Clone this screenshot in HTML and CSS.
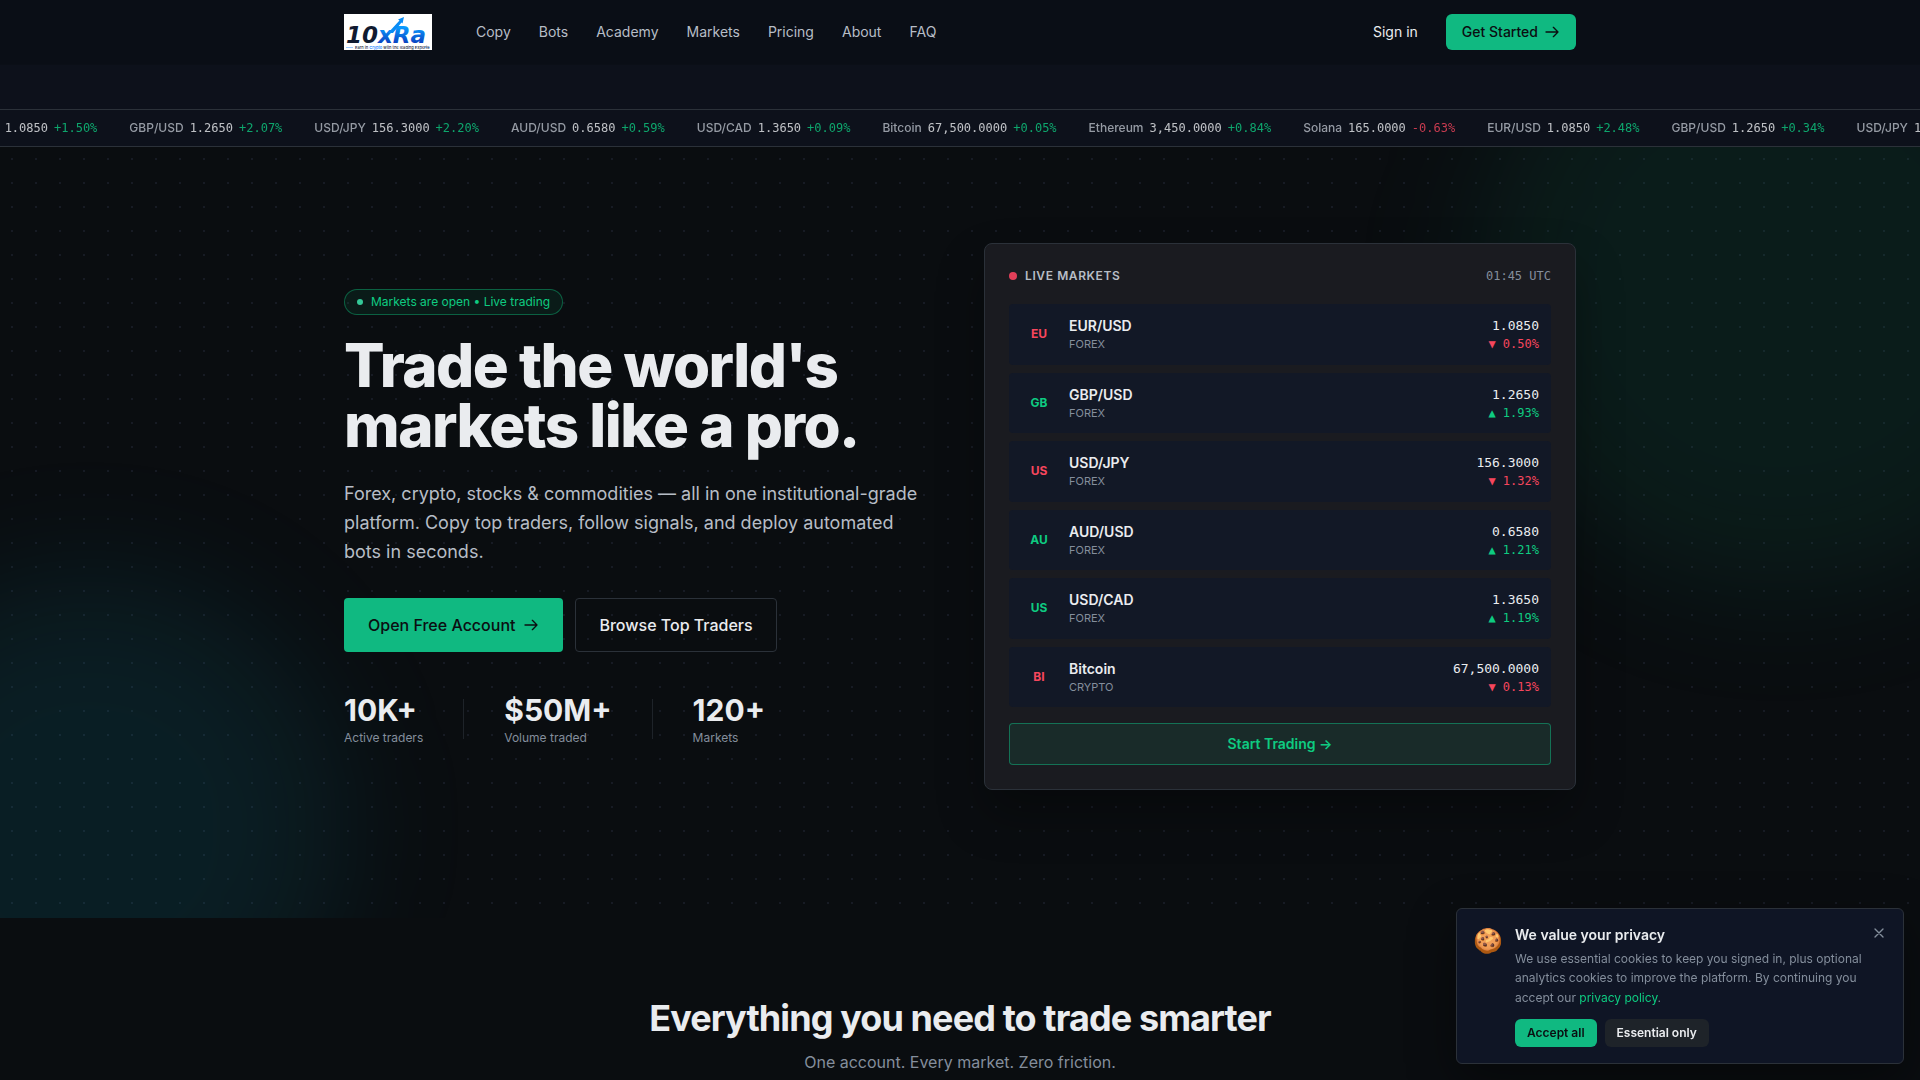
FILE: index.html
```html
<!DOCTYPE html>
<html lang="en">
<head>
    <meta charset="UTF-8">
    <meta name="viewport" content="width=device-width, initial-scale=1.0">
    <title>10xRa</title>
    <link rel="stylesheet" href="styles.css">
</head>
<body>
    <header class="site-header">
        <div class="container header-inner">
            <a href="#" class="logo" aria-label="10xRa">
                <svg viewBox="0 0 88 36" width="88" height="36">
                    <defs>
                        <linearGradient id="logoBlue" x1="0" y1="0" x2="0" y2="1">
                            <stop offset="0.2" stop-color="#0a9bff"/>
                            <stop offset="0.9" stop-color="#0a35b8"/>
                        </linearGradient>
                    </defs>
                    <rect width="88" height="36" fill="#fff"/>
                    <text class="logo-text" x="2" y="29"><tspan fill="#101a30">10</tspan><tspan fill="url(#logoBlue)">xRa</tspan></text>
                    <path d="M44 19 55.500 6.500 54 5.500 60 3 58.500 9.500 57.500 8.500 49 19z" fill="#0a8cf5"/>
                    <path d="M2 33.500h7M80 33.500h6" stroke="#5aa7ff" stroke-width=".6"/>
                    <text class="logo-tagline" x="11" y="35">Earn in <tspan fill="#0a7bff">Crypto</tspan> with the leading Experts</text>
                </svg>
            </a>
            <nav class="main-nav">
                <a href="#">Copy</a>
                <a href="#">Bots</a>
                <a href="#">Academy</a>
                <a href="#">Markets</a>
                <a href="#">Pricing</a>
                <a href="#">About</a>
                <a href="#">FAQ</a>
            </nav>
            <div class="header-actions">
                <a href="#" class="sign-in">Sign in</a>
                <a href="#" class="btn btn-primary btn-small">Get Started
                    <svg class="arrow" viewBox="0 0 24 24"><path d="M3 12h18M14 5l7 7-7 7"/></svg>
                </a>
            </div>
        </div>
    </header>

    <div class="ticker">
        <div class="ticker-track">
            <div class="ticker-item"><span>EUR/USD</span><b>1.0850</b><i class="up">+1.50%</i></div>
            <div class="ticker-item"><span>GBP/USD</span><b>1.2650</b><i class="up">+2.07%</i></div>
            <div class="ticker-item"><span>USD/JPY</span><b>156.3000</b><i class="up">+2.20%</i></div>
            <div class="ticker-item"><span>AUD/USD</span><b>0.6580</b><i class="up">+0.59%</i></div>
            <div class="ticker-item"><span>USD/CAD</span><b>1.3650</b><i class="up">+0.09%</i></div>
            <div class="ticker-item"><span>Bitcoin</span><b>67,500.0000</b><i class="up">+0.05%</i></div>
            <div class="ticker-item"><span>Ethereum</span><b>3,450.0000</b><i class="up">+0.84%</i></div>
            <div class="ticker-item"><span>Solana</span><b>165.0000</b><i class="down">-0.63%</i></div>
            <div class="ticker-item"><span>EUR/USD</span><b>1.0850</b><i class="up">+2.48%</i></div>
            <div class="ticker-item"><span>GBP/USD</span><b>1.2650</b><i class="up">+0.34%</i></div>
            <div class="ticker-item"><span>USD/JPY</span><b>156.3000</b><i class="up">+1.12%</i></div>
        </div>
    </div>

    <main>
        <section class="hero">
            <div class="glow glow-green"></div>
            <div class="glow glow-cyan"></div>
            <div class="container hero-grid">
                <div class="hero-copy">
                    <div class="badge"><span class="badge-dot"></span>Markets are open • Live trading</div>
                    <h1>Trade the world's markets like a pro.</h1>
                    <p class="lead">Forex, crypto, stocks &amp; commodities — all in one institutional-grade platform. Copy top traders, follow signals, and deploy automated bots in seconds.</p>
                    <div class="hero-buttons">
                        <a href="#" class="btn btn-primary btn-large">Open Free Account
                            <svg class="arrow" viewBox="0 0 24 24"><path d="M3 12h18M14 5l7 7-7 7"/></svg>
                        </a>
                        <a href="#" class="btn btn-outline btn-large">Browse Top Traders</a>
                    </div>
                    <div class="stats">
                        <div class="stat"><strong>10K+</strong><span>Active traders</span></div>
                        <div class="stat-divider"></div>
                        <div class="stat"><strong>$50M+</strong><span>Volume traded</span></div>
                        <div class="stat-divider"></div>
                        <div class="stat"><strong>120+</strong><span>Markets</span></div>
                    </div>
                </div>

                <div class="market-card">
                    <div class="market-head">
                        <h2><span class="live-dot"></span>Live Markets</h2>
                        <time>01:45 UTC</time>
                    </div>
                    <div class="market-list">
                        <a href="#" class="market-row">
                            <span class="symbol down">EU</span>
                            <span class="pair"><b>EUR/USD</b><small>Forex</small></span>
                            <span class="quote"><b>1.0850</b><small class="down">▼ 0.50%</small></span>
                        </a>
                        <a href="#" class="market-row">
                            <span class="symbol up">GB</span>
                            <span class="pair"><b>GBP/USD</b><small>Forex</small></span>
                            <span class="quote"><b>1.2650</b><small class="up">▲ 1.93%</small></span>
                        </a>
                        <a href="#" class="market-row">
                            <span class="symbol down">US</span>
                            <span class="pair"><b>USD/JPY</b><small>Forex</small></span>
                            <span class="quote"><b>156.3000</b><small class="down">▼ 1.32%</small></span>
                        </a>
                        <a href="#" class="market-row">
                            <span class="symbol up">AU</span>
                            <span class="pair"><b>AUD/USD</b><small>Forex</small></span>
                            <span class="quote"><b>0.6580</b><small class="up">▲ 1.21%</small></span>
                        </a>
                        <a href="#" class="market-row">
                            <span class="symbol up">US</span>
                            <span class="pair"><b>USD/CAD</b><small>Forex</small></span>
                            <span class="quote"><b>1.3650</b><small class="up">▲ 1.19%</small></span>
                        </a>
                        <a href="#" class="market-row">
                            <span class="symbol down">BI</span>
                            <span class="pair"><b>Bitcoin</b><small>Crypto</small></span>
                            <span class="quote"><b>67,500.0000</b><small class="down">▼ 0.13%</small></span>
                        </a>
                    </div>
                    <a href="#" class="start-trading">Start Trading →</a>
                </div>
            </div>
        </section>

        <section class="features">
            <h2>Everything you need to trade smarter</h2>
            <p>One account. Every market. Zero friction.</p>
        </section>
    </main>

    <div class="cookie-banner" role="dialog" aria-labelledby="cookieTitle">
        <div class="cookie-icon">🍪</div>
        <div class="cookie-body">
            <h3 id="cookieTitle">We value your privacy</h3>
            <p>We use essential cookies to keep you signed in, plus optional analytics cookies to improve the platform. By continuing you accept our <a href="#">privacy policy</a>.</p>
            <div class="cookie-buttons">
                <button type="button" class="btn-accept">Accept all</button>
                <button type="button" class="btn-essential">Essential only</button>
            </div>
        </div>
        <button type="button" class="cookie-close" aria-label="Close">
            <svg viewBox="0 0 24 24" width="16" height="16"><path d="M18 6 6 18M6 6l12 12"/></svg>
        </button>
    </div>
</body>
</html>
```

FILE: styles.css
```css
:root {
    --bg: #0a0d10;
    --surface: #0d111b;
    --row: #121826;
    --card: #1a1b20;
    --border: #2b3139;
    --primary: #10b981;
    --up: #0ecb81;
    --down: #f6465d;
    --text: #eaecef;
    --text-soft: #b7bdc6;
    --text-muted: #848e9c;
    --mono: "DejaVu Sans Mono", monospace;
}

* {
    box-sizing: border-box;
    margin: 0;
    padding: 0;
}

body {
    font-family: Inter, sans-serif;
    font-size: 16px;
    line-height: 24px;
    color: var(--text);
    background-color: var(--bg);
    overflow-x: hidden;
}

a {
    color: inherit;
    text-decoration: none;
}

.up {
    color: var(--up);
}

.down {
    color: var(--down);
}

.container {
    width: 100%;
    max-width: 1280px;
    margin: 0 auto;
    padding: 0 24px;
}

/* Header */
.site-header {
    position: fixed;
    top: 0;
    left: 0;
    right: 0;
    z-index: 10;
    background-color: #0a0e16;
    border-bottom: 1px solid #0b0f17;
}

.header-inner {
    display: flex;
    align-items: center;
    height: 64px;
    font-size: 14px;
    line-height: 20px;
}

.logo {
    display: flex;
    margin-right: 44px;
}

.logo-text {
    font: italic 700 23px "DejaVu Sans", sans-serif;
}

.logo-tagline {
    font: 500 4px Inter, sans-serif;
    fill: #1c2740;
}

.main-nav {
    display: flex;
    gap: 28px;
    color: var(--text-soft);
}

.header-actions {
    display: flex;
    align-items: center;
    gap: 28px;
    margin-left: auto;
}

/* Buttons */
.btn {
    display: inline-flex;
    align-items: center;
    gap: 8px;
    border: 1px solid transparent;
    border-radius: 4px;
    font-weight: 500;
}

.btn-primary {
    color: #0b0e11;
    background-color: var(--primary);
}

.btn-outline {
    border-color: var(--border);
}

.btn-small {
    gap: 6px;
    padding: 7px 15px;
    border-radius: 6px;
}

.btn-large {
    padding: 14px 23px;
    font-size: 16px;
    line-height: 24px;
}

.arrow {
    width: 16px;
    height: 16px;
    fill: none;
    stroke: currentColor;
    stroke-width: 2;
    stroke-linecap: round;
    stroke-linejoin: round;
}

/* Ticker */
.ticker {
    padding-top: 109px;
    background-color: var(--surface);
    overflow: hidden;
}

.ticker-track {
    display: flex;
    gap: 32px;
    margin-left: -55px;
    padding: 10px 0;
    border-top: 1px solid var(--border);
    border-bottom: 1px solid var(--border);
    font-size: 12px;
    line-height: 16px;
    white-space: nowrap;
}

.ticker-item {
    display: flex;
    gap: 6px;
    opacity: 0.8;
}

.ticker-item span {
    color: var(--text-soft);
    font-weight: 500;
}

.ticker-item b,
.ticker-item i {
    font-family: var(--mono);
    font-style: normal;
    font-weight: 400;
}

/* Hero */
.hero {
    position: relative;
    padding: 96px 0 128px;
    overflow: hidden;
    isolation: isolate;
}

.hero::before {
    content: "";
    position: absolute;
    inset: 0;
    z-index: -1;
    background-image: radial-gradient(circle, #171b24 1px, transparent 1px);
    background-size: 24px 24px;
}

.glow {
    position: absolute;
    z-index: -1;
    border-radius: 50%;
    filter: blur(64px);
}

.glow-green {
    top: -160px;
    right: -160px;
    width: 600px;
    height: 600px;
    background-color: rgba(16, 185, 129, 0.09);
}

.glow-cyan {
    bottom: -160px;
    left: -160px;
    width: 500px;
    height: 500px;
    background-color: rgba(6, 182, 212, 0.1);
}

.hero-grid {
    display: grid;
    grid-template-columns: 1fr 1fr;
    align-items: center;
    gap: 48px;
}

.badge {
    display: inline-flex;
    align-items: center;
    gap: 8px;
    padding: 4px 12px;
    border: 1px solid rgba(14, 203, 129, 0.4);
    border-radius: 999px;
    background-color: rgba(14, 203, 129, 0.08);
    color: var(--up);
    font-size: 12px;
    line-height: 16px;
}

.badge-dot {
    width: 6px;
    height: 6px;
    border-radius: 50%;
    background-color: #34c897;
}

h1 {
    margin-top: 20px;
    font-size: 60px;
    line-height: 60px;
    font-weight: 800;
    letter-spacing: -0.025em;
}

.lead {
    margin-top: 24px;
    max-width: 576px;
    color: var(--text-soft);
    font-size: 18px;
    line-height: 29px;
}

.hero-buttons {
    display: flex;
    gap: 12px;
    margin-top: 32px;
}

.stats {
    display: flex;
    align-items: center;
    gap: 40px;
    margin-top: 40px;
}

.stat strong {
    display: block;
    font-size: 30px;
    line-height: 36px;
    font-weight: 700;
}

.stat span {
    display: block;
    margin-top: 2px;
    color: var(--text-muted);
    font-size: 12px;
    line-height: 16px;
}

.stat-divider {
    width: 1px;
    height: 40px;
    background-color: #1e2329;
}

/* Market card */
.market-card {
    padding: 24px;
    border: 1px solid var(--border);
    border-radius: 8px;
    background-color: var(--card);
    box-shadow: 0 24px 48px rgba(0, 0, 0, 0.3);
}

.market-head {
    display: flex;
    justify-content: space-between;
    margin-bottom: 20px;
    font-size: 12px;
    line-height: 16px;
}

.market-head h2 {
    display: flex;
    align-items: center;
    gap: 8px;
    color: var(--text-soft);
    font-size: 12px;
    font-weight: 600;
    letter-spacing: 0.05em;
    text-transform: uppercase;
}

.live-dot {
    width: 8px;
    height: 8px;
    border-radius: 50%;
    background-color: #e23f59;
}

.market-head time {
    color: var(--text-muted);
    font-family: var(--mono);
}

.market-list {
    display: grid;
    gap: 8px;
}

.market-row {
    display: flex;
    align-items: center;
    gap: 12px;
    padding: 12px;
    border-radius: 4px;
    background-color: var(--row);
}

.symbol {
    width: 36px;
    font-size: 12px;
    line-height: 16px;
    font-weight: 700;
    text-align: center;
}

.pair b,
.quote b {
    display: block;
    font-size: 14px;
    line-height: 20px;
}

.pair b {
    font-weight: 600;
}

.pair small,
.quote small {
    display: block;
    font-size: 11px;
    line-height: 1.5;
}

.pair small {
    color: var(--text-muted);
    text-transform: uppercase;
}

.quote {
    margin-left: auto;
    font-family: var(--mono);
    text-align: right;
}

.quote b {
    font-size: 13px;
    font-weight: 400;
}

.quote small {
    font-size: 12px;
    line-height: 16px;
}

.start-trading {
    display: block;
    margin-top: 16px;
    padding: 10px;
    border: 1px solid rgba(16, 185, 129, 0.5);
    border-radius: 4px;
    background-color: rgba(16, 185, 129, 0.1);
    color: var(--up);
    font-size: 14px;
    line-height: 20px;
    font-weight: 600;
    text-align: center;
}

/* Features */
.features {
    padding: 80px 24px;
    text-align: center;
}

.features h2 {
    font-size: 36px;
    line-height: 40px;
    font-weight: 700;
    letter-spacing: -0.025em;
}

.features p {
    margin-top: 12px;
    color: var(--text-muted);
}

/* Cookie banner */
.cookie-banner {
    position: fixed;
    right: 16px;
    bottom: 16px;
    z-index: 20;
    display: flex;
    align-items: flex-start;
    gap: 12px;
    width: 448px;
    padding: 16px;
    border: 1px solid var(--border);
    border-radius: 6px;
    background-color: #0f1525;
    box-shadow: 0 16px 48px rgba(0, 0, 0, 0.4);
}

.cookie-icon {
    font-size: 24px;
    line-height: 32px;
}

.cookie-body {
    flex: 1;
    padding-right: 16px;
}

.cookie-body h3 {
    font-size: 14px;
    line-height: 20px;
    font-weight: 600;
}

.cookie-body p {
    margin-top: 4px;
    color: var(--text-muted);
    font-size: 12px;
    line-height: 1.625;
}

.cookie-body p a {
    color: var(--up);
}

.cookie-buttons {
    display: flex;
    gap: 8px;
    margin-top: 12px;
}

.cookie-buttons button {
    padding: 6px 12px;
    border: none;
    border-radius: 6px;
    font-family: inherit;
    font-size: 12px;
    line-height: 16px;
    font-weight: 600;
    cursor: pointer;
}

.btn-accept {
    background-color: var(--primary);
    color: #0b0e11;
}

.cookie-buttons .btn-essential {
    background-color: #1e2329;
    color: var(--text);
}

.cookie-close {
    position: absolute;
    top: 16px;
    right: 16px;
    display: flex;
    border: none;
    background: none;
    color: var(--text-muted);
    cursor: pointer;
}

.cookie-close svg {
    fill: none;
    stroke: currentColor;
    stroke-width: 2;
    stroke-linecap: round;
}
```
